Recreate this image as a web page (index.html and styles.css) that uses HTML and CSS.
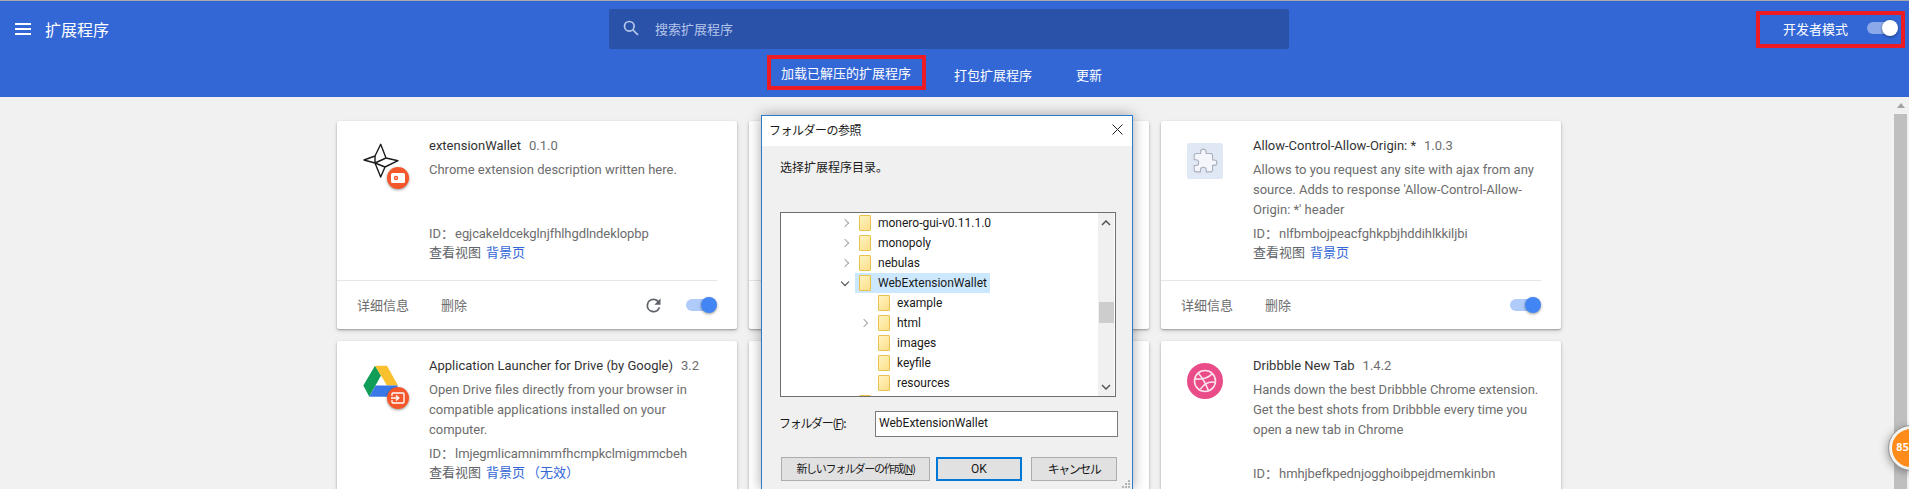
FILE: index.html
```html
<!DOCTYPE html>
<html lang="zh">
<head>
  <meta charset="UTF-8" />
  <title>扩展程序</title>
  <link rel="stylesheet" href="styles.css">
</head>
<body>
  <header class="toolbar">
    <div class="toolbar-top">
      <div class="toolbar-left">
        <svg class="menu-icon" width="16" height="12" viewBox="0 0 16 12"><path d="M0 0h16v2H0zM0 5h16v2H0zM0 10h16v2H0z" fill="#fff"/></svg>
        <h1 class="toolbar-title">扩展程序</h1>
      </div>
      <div class="search">
        <svg width="16" height="16" viewBox="0 0 16 16" fill="none" stroke="#b9c9ec" stroke-width="1.7"><circle cx="6.3" cy="6.3" r="4.8"/><path d="M10 10l5 5"/></svg>
        <span>搜索扩展程序</span>
      </div>
      <div class="dev-mode">
        <span>开发者模式</span>
        <span class="switch switch-light"><i></i></span>
      </div>
    </div>
    <nav class="subnav">
      <a class="subnav-item marked">加载已解压的扩展程序</a>
      <a class="subnav-item">打包扩展程序</a>
      <a class="subnav-item">更新</a>
    </nav>
  </header>

  <div class="page">
    <main class="cards">
      <section class="card">
        <div class="card-main">
          <div class="card-icon">
            <svg width="36" height="36" viewBox="0 0 36 36" fill="none" stroke="#1c1c1c" stroke-width="1.4" stroke-linejoin="round"><path d="M17.700 1.300L23 15l12 2.700L22 24l-4.300 10L12 20 1 17l11-4z"/><path d="M12 13v7M12 20l11-5M12 20l10 4"/></svg>
            <span class="icon-badge"><svg width="14" height="10" viewBox="0 0 14 10"><rect width="14" height="10" rx="1.500" fill="#fff"/><circle cx="5" cy="5" r="2.200" fill="#f4572a"/><circle cx="5" cy="5" r=".8" fill="#fff"/></svg></span>
          </div>
          <div class="card-text">
            <div class="card-name">extensionWallet<span class="version">0.1.0</span></div>
            <p class="card-desc">Chrome extension description written here.</p>
            <div class="card-id">ID：<span>egjcakeldcekglnjfhlhgdlndeklopbp</span></div>
            <div class="card-views">查看视图<a>背景页</a></div>
          </div>
        </div>
        <div class="card-foot">
          <span class="foot-btn">详细信息</span>
          <span class="foot-btn">删除</span>
          <svg class="reload" width="21" height="21" viewBox="0 0 24 24"><path d="M17.650 6.350A7.960 7.960 0 0 0 12 4a8 8 0 1 0 7.740 10h-2.080A6 6 0 1 1 12 6c1.660 0 3.140.69 4.220 1.780L13 11h7V4z" fill="#5f6368"/></svg>
          <span class="switch"><i></i></span>
        </div>
      </section>

      <section class="card">
        <div class="card-main"></div>
        <div class="card-foot"></div>
      </section>

      <section class="card">
        <div class="card-main">
          <div class="card-icon">
            <div class="puzzle-box">
              <svg width="26" height="26" viewBox="0 0 24 24" fill="#f4f6fb" stroke="#a9b0bb" stroke-width="1"><path d="M20.500 11H19V7a2 2 0 0 0-2-2h-4V3.500a2.500 2.500 0 0 0-5 0V5H4a2 2 0 0 0-2 2v3.800h1.500a2.700 2.700 0 0 1 0 5.400H2V20a2 2 0 0 0 2 2h3.800v-1.500a2.700 2.700 0 0 1 5.400 0V22H17a2 2 0 0 0 2-2v-4h1.500a2.500 2.500 0 0 0 0-5z"/></svg>
            </div>
          </div>
          <div class="card-text">
            <div class="card-name">Allow-Control-Allow-Origin: *<span class="version">1.0.3</span></div>
            <p class="card-desc">Allows to you request any site with ajax from any source. Adds to response 'Allow-Control-Allow-Origin: *' header</p>
            <div class="card-id">ID：<span>nlfbmbojpeacfghkpbjhddihlkkiljbi</span></div>
            <div class="card-views">查看视图<a>背景页</a></div>
          </div>
        </div>
        <div class="card-foot">
          <span class="foot-btn">详细信息</span>
          <span class="foot-btn">删除</span>
          <span class="switch push"><i></i></span>
        </div>
      </section>

      <section class="card">
        <div class="card-main">
          <div class="card-icon">
            <svg width="36" height="36" viewBox="0 0 36 36"><path d="M12 2.700l6 9.800L6.300 33.700.3 22.500z" fill="#0f9d58"/><path d="M12 2.700h12l11 19.800H24z" fill="#fbc02d"/><path d="M12.500 22.500H35l-6 11.200H6.300z" fill="#3b78e7"/></svg>
            <span class="icon-badge"><svg width="14" height="12" viewBox="0 0 14 12" fill="none" stroke="#fff" stroke-width="1.300"><path d="M1 4V2a1 1 0 0 1 1-1h10a1 1 0 0 1 1 1v8a1 1 0 0 1-1 1H2a1 1 0 0 1-1-1V8"/><path d="M0 6h7M5 3.500L7.800 6 5 8.500" stroke-width="1.500"/></svg></span>
          </div>
          <div class="card-text">
            <div class="card-name">Application Launcher for Drive (by Google)<span class="version">3.2</span></div>
            <p class="card-desc">Open Drive files directly from your browser in compatible applications installed on your computer.</p>
            <div class="card-id">ID：<span>lmjegmlicamnimmfhcmpkclmigmmcbeh</span></div>
            <div class="card-views">查看视图<a>背景页</a><a class="invalid">（无效）</a></div>
          </div>
        </div>
      </section>

      <section class="card">
        <div class="card-main"></div>
      </section>

      <section class="card">
        <div class="card-main">
          <div class="card-icon">
            <svg width="36" height="36" viewBox="0 0 36 36" fill="none"><circle cx="18" cy="18" r="18" fill="#ea4c89"/><g stroke="#fbe3ec" stroke-width="1.600"><circle cx="18" cy="18" r="10.500"/><path d="M11 9.800c3.500 4 7.500 10 10.500 18M25.500 10.500C22 14.500 15 16.500 7.800 16M28.500 19.500c-5-1.500-10-.5-15 6.500"/></g></svg>
          </div>
          <div class="card-text">
            <div class="card-name">Dribbble New Tab<span class="version">1.4.2</span></div>
            <p class="card-desc">Hands down the best Dribbble Chrome extension. Get the best shots from Dribbble every time you open a new tab in Chrome</p>
            <div class="card-id">ID：<span>hmhjbefkpednjogghoibpejdmemkinbn</span></div>
          </div>
        </div>
      </section>
    </main>

    <div class="scrollbar">
      <span class="scroll-up"></span>
      <span class="scroll-thumb"></span>
    </div>
  </div>

  <div class="dialog">
    <div class="dialog-title">
      <span>フォルダーの参照</span>
      <svg width="11" height="11" viewBox="0 0 11 11" stroke="#222" stroke-width="1"><path d="M.5.500l10 10M10.500.500l-10 10"/></svg>
    </div>
    <div class="dialog-body">
      <p class="dialog-prompt">选择扩展程序目录。</p>
      <div class="tree">
        <ul class="tree-list">
          <li class="tree-row lvl1 closed"><b></b><i class="folder"></i><span>monero-gui-v0.11.1.0</span></li>
          <li class="tree-row lvl1 closed"><b></b><i class="folder"></i><span>monopoly</span></li>
          <li class="tree-row lvl1 closed"><b></b><i class="folder"></i><span>nebulas</span></li>
          <li class="tree-row lvl1 open selected"><b></b><i class="folder"></i><span>WebExtensionWallet</span></li>
          <li class="tree-row lvl2"><b></b><i class="folder"></i><span>example</span></li>
          <li class="tree-row lvl2 closed"><b></b><i class="folder"></i><span>html</span></li>
          <li class="tree-row lvl2"><b></b><i class="folder"></i><span>images</span></li>
          <li class="tree-row lvl2"><b></b><i class="folder"></i><span>keyfile</span></li>
          <li class="tree-row lvl2"><b></b><i class="folder"></i><span>resources</span></li>
          <li class="tree-row lvl1"><b></b><i class="folder"></i><span></span></li>
        </ul>
        <div class="tree-scroll">
          <svg width="10" height="6" viewBox="0 0 10 6" fill="none" stroke="#555" stroke-width="1.500"><path d="M1 5l4-4 4 4"/></svg>
          <span class="tree-thumb"></span>
          <svg width="10" height="6" viewBox="0 0 10 6" fill="none" stroke="#555" stroke-width="1.500"><path d="M1 1l4 4 4-4"/></svg>
        </div>
      </div>
      <div class="folder-field">
        <label class="folder-label">フォルダー(<u>F</u>):</label>
        <div class="folder-input">WebExtensionWallet</div>
      </div>
      <div class="dialog-buttons">
        <span class="win-btn new-folder"><span>新しいフォルダーの作成(<u>N</u>)</span></span>
        <span class="win-btn ok">OK</span>
        <span class="win-btn cancel">キャンセル</span>
      </div>
    </div>
    <svg class="grip" width="8" height="8" viewBox="0 0 8 8" fill="#b5b5b5"><path d="M6 0h2v2H6zM3 3h2v2H3zM6 3h2v2H6zM0 6h2v2H0zM3 6h2v2H3zM6 6h2v2H6z"/></svg>
  </div>

  <div class="float-badge">85</div>
</body>
</html>
```

FILE: styles.css
```css
* {
  box-sizing: border-box;
}
html, body {
  height: 489px;
  overflow: hidden;
}
body {
  margin: 0;
  background: #f1f1f1;
  border-top: 1px solid #aaa;
  font-family: Roboto, "Noto Sans CJK SC", sans-serif;
  font-size: 13px;
  color: #5f6368;
}

/* blue toolbar */
.toolbar {
  height: 96px;
  background: #3367d6;
  color: #fff;
}
.toolbar-top {
  height: 56px;
  display: flex;
  align-items: flex-start;
}
.toolbar-left {
  width: 609px;
  height: 56px;
  padding-left: 15px;
  display: flex;
  align-items: center;
  gap: 14px;
}
.toolbar-title {
  margin: 0;
  font-size: 16px;
  font-weight: 400;
  padding-top: 3px;
  line-height: 20px;
}
.search {
  width: 680px;
  height: 40px;
  margin-top: 8px;
  padding: 0 0 2px 14px;
  display: flex;
  align-items: center;
  gap: 16px;
  background: #2a52a8;
  border-radius: 2px;
  color: #b4c5eb;
}
.dev-mode {
  width: 149px;
  height: 37px;
  margin: 10px 0 0 467px;
  padding: 0 0 3px 23px;
  display: flex;
  align-items: center;
  gap: 19px;
  border: 4px solid #ed1c24;
}
.subnav {
  height: 40px;
  padding-left: 767px;
  display: flex;
  align-items: flex-start;
  gap: 14px;
}
.subnav-item {
  height: 35px;
  padding: 0 14px;
  line-height: 37px;
}
.subnav-item:last-child {
  margin-left: 2px;
}
.subnav-item.marked {
  width: 159px;
  padding: 0 10px;
  line-height: 29px;
  margin-top: -2px;
  border: 4px solid #ed1c24;
  white-space: nowrap;
}

/* toggles */
.switch {
  position: relative;
  display: block;
  width: 28px;
  height: 12px;
  border-radius: 6px;
  background: #aecbfa;
  flex: none;
}
.switch i {
  position: absolute;
  top: -2px;
  right: -3px;
  width: 16px;
  height: 16px;
  border-radius: 50%;
  background: #4285f4;
  box-shadow: 0 1px 3px rgba(0, 0, 0, .4);
}
.switch-light {
  background: #8ba9e9;
}
.switch-light i {
  background: #fff;
}

/* cards */
.page {
  height: 392px;
  display: flex;
  overflow: hidden;
}
.cards {
  flex: 1;
  padding: 24px 0 0 337px;
  display: grid;
  grid-template-columns: repeat(3, 400px);
  grid-auto-rows: 208px;
  gap: 12px;
}
.card {
  padding-right: 20px;
  background: #fff;
  border-radius: 2px;
  box-shadow: 0 1px 2px rgba(0, 0, 0, .3), 0 2px 5px rgba(0, 0, 0, .12);
}
.card-main {
  height: 160px;
  display: flex;
  border-bottom: 1px solid #e6e6e6;
}
.card-icon {
  position: relative;
  width: 36px;
  height: 36px;
  margin: 22px 30px 0 26px;
  flex: none;
}
.card-icon svg {
  display: block;
}
.icon-badge {
  position: absolute;
  left: 24px;
  top: 24px;
  width: 22px;
  height: 22px;
  border-radius: 50%;
  background: #f4572a;
  box-shadow: 0 1px 3px rgba(0, 0, 0, .4);
  display: flex;
  align-items: center;
  justify-content: center;
}
.puzzle-box {
  width: 36px;
  height: 36px;
  border-radius: 2px;
  background: #e1e8f5;
  display: flex;
  align-items: center;
  justify-content: center;
}
.card-text {
  flex: 1;
  min-width: 0;
  padding: 15px 0 17px;
  display: flex;
  flex-direction: column;
  line-height: 20px;
}
.card-name {
  color: #333;
  white-space: nowrap;
}
.version {
  margin-left: 8px;
  color: #6d6d6d;
}
.card-desc {
  margin: 4px 0 0;
  color: #6d6d6d;
}
.card-id {
  height: 20px;
  margin-top: auto;
  padding-top: 1px;
  color: #6d6d6d;
}
.card-id span {
  margin-left: 1px;
  letter-spacing: -.08px;
}
.card-views {
  color: #5f6368;
}
.card-views a {
  margin-left: 5px;
  color: #3367d6;
}
.card-views a.invalid {
  margin-left: 2px;
}
.card-foot {
  height: 48px;
  padding-left: 20px;
  display: flex;
  align-items: center;
  gap: 32px;
}
.card-foot .switch {
  margin-right: 3px;
}
.foot-btn {
  margin-bottom: 2px;
  color: #6d6d6d;
}
.reload {
  margin: 1px -10px 0 auto;
}
.push {
  margin-left: auto;
}

/* page scrollbar */
.scrollbar {
  width: 13px;
  margin-right: 2px;
  display: flex;
  flex-direction: column;
  align-items: center;
}
.scroll-up {
  margin-top: 6px;
  border: 4px solid transparent;
  border-top: 0;
  border-bottom: 5px solid #a3a3a3;
}
.scroll-thumb {
  flex: 1;
  width: 13px;
  margin-top: 6px;
  background: #bfbfbf;
}

/* windows folder picker */
.dialog {
  position: absolute;
  left: 761px;
  top: 115px;
  width: 372px;
  height: 374px;
  background: #f0f0f0;
  border: 1px solid #2b7cc9;
  border-bottom: 0;
  box-shadow: 0 0 12px rgba(0, 0, 0, .35);
  font-family: "Noto Sans CJK JP", sans-serif;
  font-size: 12px;
  color: #1a1a1a;
}
.dialog-title {
  height: 30px;
  padding: 0 9px 3px 7px;
  display: flex;
  align-items: center;
  justify-content: space-between;
  background: #fff;
  letter-spacing: -.5px;
}
.dialog-body {
  padding: 0 14px 0 18px;
}
.dialog-prompt {
  margin: 0;
  height: 66px;
  padding-top: 12px;
  line-height: 18px;
  font-family: "Noto Sans CJK SC", sans-serif;
}
.tree {
  width: 336px;
  height: 185px;
  display: flex;
  background: #fff;
  border: 1px solid #6e6e6e;
  overflow: hidden;
}
.tree-list {
  flex: 1;
  margin: 0;
  padding: 0;
  list-style: none;
  font-family: Roboto, sans-serif;
}
.tree-row {
  height: 20px;
  display: flex;
  align-items: center;
  position: relative;
}
.tree-row.lvl1 {
  padding-left: 78px;
}
.tree-row.lvl2 {
  padding-left: 97px;
}
.tree-row span {
  margin-left: 7px;
}
.tree-row b {
  position: absolute;
  top: 7px;
  width: 6px;
  height: 6px;
  border-top: 1.500px solid transparent;
  border-right: 1.500px solid transparent;
  transform: rotate(45deg);
}
.tree-row.lvl1 b {
  left: 61px;
}
.tree-row.lvl2 b {
  left: 80px;
}
.tree-row.closed b {
  border-color: #a6a6a6;
}
.tree-row.open b {
  top: 6px;
  border-color: #404040;
  transform: rotate(135deg);
}
.tree-row.selected::before {
  content: "";
  position: absolute;
  left: 74px;
  top: 0;
  width: 135px;
  height: 20px;
  background: #cce8ff;
}
.tree-row.selected i,
.tree-row.selected span {
  position: relative;
}
.folder {
  width: 12px;
  height: 16px;
  flex: none;
  background: linear-gradient(135deg, #fff3bf, #fbdf8c);
  border: 1px solid #e8c14f;
  border-radius: 1px;
}
.tree-scroll {
  width: 16px;
  margin-right: 1px;
  background: #f0f0f0;
  display: flex;
  flex-direction: column;
  align-items: center;
  position: relative;
}
.tree-scroll svg {
  position: absolute;
}
.tree-scroll svg:first-child {
  top: 7px;
}
.tree-scroll svg:last-child {
  bottom: 6px;
}
.tree-thumb {
  width: 15px;
  height: 21px;
  margin-top: 89px;
  background: #cdcdcd;
}
.folder-field {
  height: 26px;
  margin-top: 14px;
  display: flex;
  align-items: center;
}
.folder-label {
  width: 95px;
  margin-left: -1px;
  margin-right: 1px;
  padding-bottom: 3px;
  letter-spacing: -1.300px;
}
.folder-input {
  width: 243px;
  height: 26px;
  padding-left: 3px;
  line-height: 22px;
  background: #fff;
  border: 1px solid #7a7a7a;
  font-family: Roboto, sans-serif;
}
.dialog-buttons {
  margin-top: 20px;
  display: flex;
}
.win-btn {
  height: 24px;
  padding-bottom: 2px;
  display: flex;
  align-items: center;
  justify-content: center;
  background: #e1e1e1;
  border: 1px solid #adadad;
  white-space: nowrap;
}
.new-folder {
  width: 149px;
  margin-left: 1px;
  font-size: 11px;
  letter-spacing: -1.300px;
}
.ok {
  width: 86px;
  margin-left: 6px;
  padding-bottom: 0;
  border: 2px solid #0078d7;
  font-family: Roboto, sans-serif;
}
.cancel {
  width: 86px;
  margin-left: 9px;
  letter-spacing: -1.500px;
}
.grip {
  position: absolute;
  right: 2px;
  bottom: 1px;
}

/* floating widget at the right edge */
.float-badge {
  position: absolute;
  left: 1889px;
  top: 426px;
  width: 44px;
  height: 44px;
  padding-left: 4px;
  line-height: 38px;
  border-radius: 50%;
  background: #ff8c1a;
  border: 3px solid #f4f4f4;
  outline: 1px solid #9a9a9a;
  box-shadow: -2px 2px 8px rgba(0, 0, 0, .35);
  color: #fff;
  font-family: "DejaVu Sans Mono", monospace;
  font-size: 11px;
  font-weight: 700;
}
```
